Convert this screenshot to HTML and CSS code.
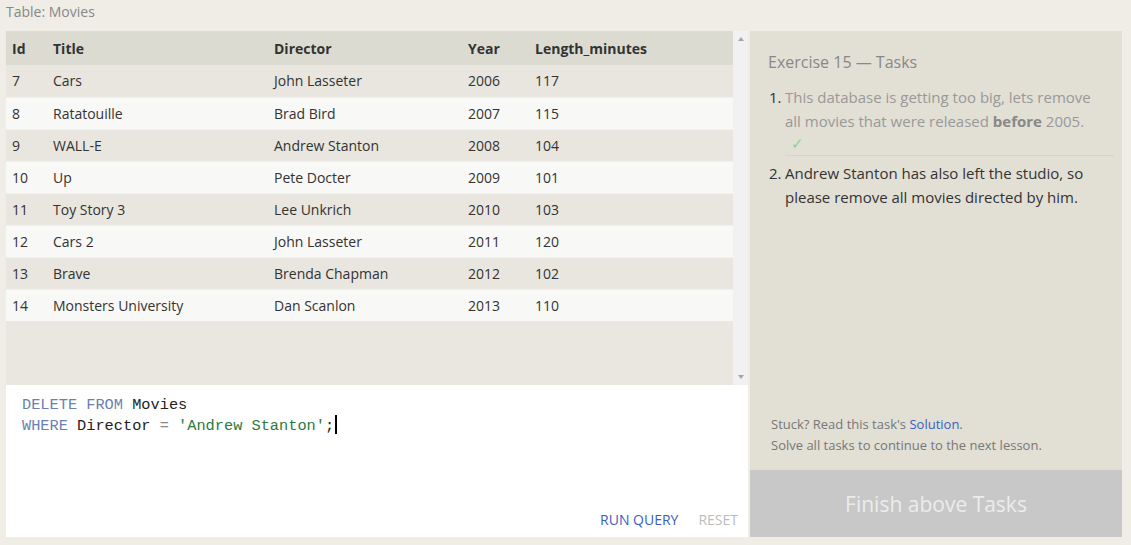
FILE: index.html
```html
<!DOCTYPE html>
<html>
<head>
<meta charset="utf-8">
<link rel="stylesheet" href="styles.css">
</head>
<body>
<div class="page">
  <div class="table-label">Table: Movies</div>
  <div class="workspace">
    <div class="left">
      <div class="results">
        <div class="table-wrap">
          <table class="movies">
            <thead>
              <tr><th class="c-id">Id</th><th class="c-title">Title</th><th class="c-dir">Director</th><th class="c-year">Year</th><th>Length_minutes</th></tr>
            </thead>
            <tbody>
              <tr><td>7</td><td>Cars</td><td>John Lasseter</td><td>2006</td><td>117</td></tr>
              <tr><td>8</td><td>Ratatouille</td><td>Brad Bird</td><td>2007</td><td>115</td></tr>
              <tr><td>9</td><td>WALL-E</td><td>Andrew Stanton</td><td>2008</td><td>104</td></tr>
              <tr><td>10</td><td>Up</td><td>Pete Docter</td><td>2009</td><td>101</td></tr>
              <tr><td>11</td><td>Toy Story 3</td><td>Lee Unkrich</td><td>2010</td><td>103</td></tr>
              <tr><td>12</td><td>Cars 2</td><td>John Lasseter</td><td>2011</td><td>120</td></tr>
              <tr><td>13</td><td>Brave</td><td>Brenda Chapman</td><td>2012</td><td>102</td></tr>
              <tr><td>14</td><td>Monsters University</td><td>Dan Scanlon</td><td>2013</td><td>110</td></tr>
            </tbody>
          </table>
        </div>
        <div class="scrollbar">
          <span class="arrow up"></span>
          <span class="arrow down"></span>
        </div>
      </div>
      <div class="editor">
        <pre class="code"><span class="kw">DELETE FROM</span> Movies
<span class="kw">WHERE</span> Director <span class="op">=</span> <span class="str">'Andrew Stanton'</span>;<span class="cursor"></span></pre>
        <div class="editor-actions">
          <span class="run">RUN QUERY</span>
          <span class="reset">RESET</span>
        </div>
      </div>
    </div>
    <div class="right">
      <div class="tasks">
        <div class="tasks-title">Exercise 15 — Tasks</div>
        <ol class="task-list">
          <li class="task done">
            <span class="num">1.</span>
            <div class="task-body">
              <div class="task-text">This database is getting too big, lets remove all movies that were released <b>before</b> 2005.</div>
              <div class="check">✓</div>
            </div>
          </li>
          <li class="task">
            <span class="num">2.</span>
            <div class="task-body">Andrew Stanton has also left the studio, so please remove all movies directed by him.</div>
          </li>
        </ol>
        <div class="help">
          <div>Stuck? Read this task's <span class="link">Solution</span>.</div>
          <div>Solve all tasks to continue to the next lesson.</div>
        </div>
      </div>
      <div class="finish">Finish above Tasks</div>
    </div>
  </div>
</div>
</body>
</html>
```

FILE: styles.css
```css
html, body {
  margin: 0;
  padding: 0;
  background: #efede6;
}
body {
  font-family: "Open Sans", "Noto Sans", sans-serif;
  color: #333;
}
.page {
  padding: 0 9px 8px 6px;
}
.table-label {
  height: 31px;
  line-height: 24px;
  font-size: 14px;
  color: #888;
}
.workspace {
  display: flex;
  height: 506px;
}
.left {
  width: 742px;
  display: flex;
  flex-direction: column;
}
.results {
  height: 354px;
  display: flex;
  background: #e9e7e0;
}
.table-wrap {
  flex: 1;
}
.movies {
  width: 100%;
  border-collapse: collapse;
  font-size: 14px;
}
.movies th {
  background: #dcdbd1;
  text-align: left;
  font-weight: 700;
  height: 34px;
  padding: 0 0 0 6px;
  color: #333;
}
.movies td {
  height: 30px;
  padding: 0 0 1px 6px;
  border-top: 1px solid #f2f1ec;
  color: #333;
}
.movies tbody tr:nth-child(odd) td { background: #e8e6df; }
.movies tbody tr:nth-child(even) td { background: #f8f8f6; }
.movies tbody tr:first-child td { border-top: none; height: 31px; }
.c-id { width: 35px; }
.c-title { width: 215px; }
.c-dir { width: 188px; }
.c-year { width: 61px; }
.scrollbar {
  width: 15px;
  background: #f1f1f1;
  display: flex;
  flex-direction: column;
  justify-content: space-between;
  align-items: center;
  padding: 6px 0;
  box-sizing: border-box;
}
.arrow {
  width: 0;
  height: 0;
  border-left: 3px solid transparent;
  border-right: 3px solid transparent;
}
.arrow.up { border-bottom: 4px solid #a3a3a3; }
.arrow.down { border-top: 4px solid #a3a3a3; }
.editor {
  flex: 1;
  background: #fff;
  display: flex;
  flex-direction: column;
  justify-content: space-between;
}
.code {
  margin: 0;
  padding: 10px 16px;
  font-family: "Liberation Mono", "DejaVu Sans Mono", monospace;
  font-size: 15.3px;
  line-height: 20px;
  color: #222;
}
.kw { color: #6b7fb3; }
.op { color: #888; }
.str { color: #2b7a3e; }
.cursor {
  display: inline-block;
  width: 2px;
  height: 19px;
  background: #000;
  vertical-align: -4px;
  margin-left: 1px;
}
.editor-actions {
  display: flex;
  justify-content: flex-end;
  gap: 20px;
  padding: 0 10px 8px 0;
  font-size: 14px;
}
.run { color: #3b5ec2; }
.reset { color: #bbb; }
.right {
  width: 372px;
  margin-left: 2px;
  display: flex;
  flex-direction: column;
}
.tasks {
  flex: 1;
  background: #e2dfd5;
  padding: 20px 8px 0 18px;
  display: flex;
  flex-direction: column;
}
.tasks-title {
  font-size: 16px;
  color: #888;
  line-height: 22px;
}
.task-list {
  list-style: none;
  margin: 12px 0 0;
  padding: 0;
}
.task {
  display: flex;
  font-size: 15px;
  line-height: 24px;
}
.task .num {
  width: 16px;
  padding-left: 1px;
  color: #333;
}
.task-body {
  flex: 1;
  color: #333;
}
.task.done .task-body { color: #999; }
.task-text { padding-right: 14px; }
.task.done {
  padding-bottom: 3px;
}
.task.done .task-body {
  border-bottom: 1px solid #d6d3c8;
}
.task.done b { color: #888; }
.check {
  color: #8fcf8f;
  padding-left: 6px;
  line-height: 20px;
  padding-bottom: 2px;
}
.task + .task { padding-top: 2px; }
.help {
  margin-top: auto;
  padding: 0 0 14px 3px;
  font-size: 13px;
  line-height: 21px;
  color: #777;
}
.link { color: #3b5ec2; }
.finish {
  height: 67px;
  background: #c8c8c8;
  color: #ececec;
  font-size: 21px;
  display: flex;
  align-items: center;
  justify-content: center;
}
```
